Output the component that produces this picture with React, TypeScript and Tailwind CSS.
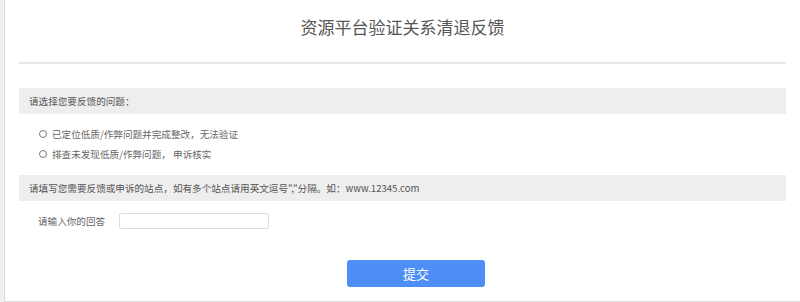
import { useState } from "react";

const options = [
  "已定位低质/作弊问题并完成整改，无法验证",
  "排查未发现低质/作弊问题， 申诉核实",
];

export default function App() {
  const [choice, setChoice] = useState<number | null>(null);
  const [answer, setAnswer] = useState("");

  return (
    <div
      className="w-[800px] h-[302px] bg-[#f0f0f0] pl-[4px] overflow-hidden"
      style={{ fontFamily: '"Noto Sans CJK SC", "Noto Sans", sans-serif' }}
    >
      <div className="h-[302px] bg-white border-l border-b border-[#dcdcdc] px-[14px]">
        {/* Title */}
        <div className="h-[64px] border-b-2 border-[#e8e8e8] pt-[17px]">
          <h1 className="text-center text-[17px] leading-[20px] text-[#555]">
            资源平台验证关系清退反馈
          </h1>
        </div>

        {/* Question */}
        <div className="mt-[24px] h-[26px] bg-[#eeeeee] pl-[10px] flex items-center text-[9.6px] text-[#555]">
          请选择您要反馈的问题：
        </div>

        <div className="pt-[10px] pb-[11px] pl-[20px]">
          {options.map((opt, i) => (
            <label
              key={opt}
              className="h-[20px] flex items-center gap-[5px] text-[9.6px] text-[#666] cursor-pointer"
              onClick={() => setChoice(i)}
            >
              <span className="w-[8px] h-[8px] rounded-full border border-[#777] flex items-center justify-center">
                {choice === i && <span className="w-[4px] h-[4px] rounded-full bg-[#555]" />}
              </span>
              {opt}
            </label>
          ))}
        </div>

        {/* Sites */}
        <div className="h-[26px] bg-[#eeeeee] pl-[10px] flex items-center text-[9.6px] text-[#555]">
          请填写您需要反馈或申诉的站点，如有多个站点请用英文逗号","分隔。如：www.12345.com
        </div>

        <div className="mt-[12px] pl-[19px] flex items-center">
          <span className="w-[81px] text-[9.6px] text-[#666] leading-[16px]">请输入你的回答</span>
          <input
            value={answer}
            onChange={(e) => setAnswer(e.target.value)}
            className="w-[150px] h-[16px] border border-[#dddddd] rounded-[2px] outline-none text-[10px] px-1"
          />
        </div>

        <div className="mt-[31px] pl-[328px]">
          <button className="w-[138px] h-[27px] rounded-[3px] bg-[#4d8ff6] text-white text-[13px] leading-[27px]">
            提交
          </button>
        </div>
      </div>
    </div>
  );
}
